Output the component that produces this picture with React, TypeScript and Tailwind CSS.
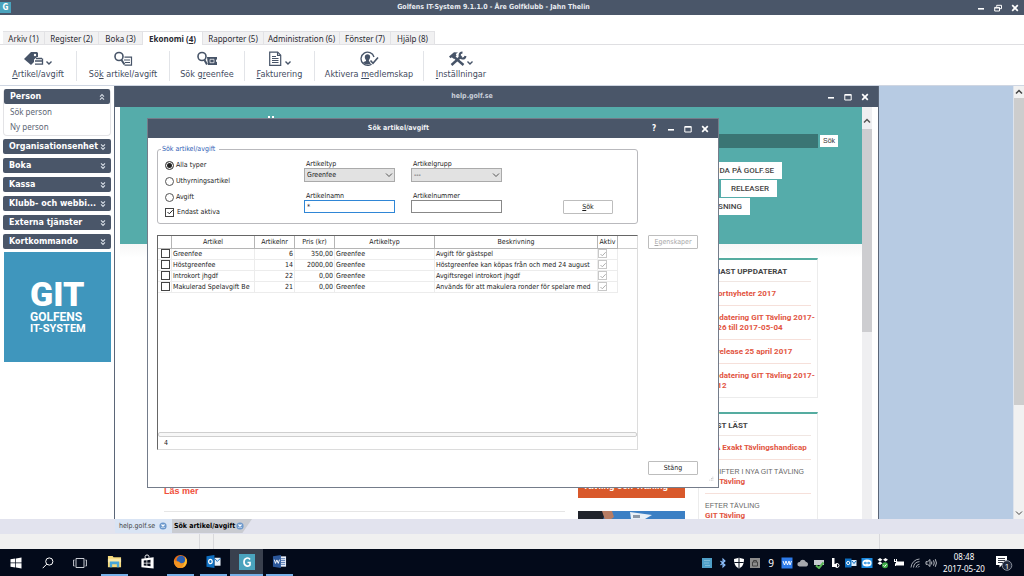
import React, { useState } from "react";
import type { ReactNode } from "react";

const UI = "font-['DejaVu_Sans_Condensed','Noto_Sans',sans-serif]";

type IconProps = { className?: string };

function ChevronDown({ className = "" }: IconProps) {
  return (
    <svg viewBox="0 0 8 8" className={className} fill="none" stroke="currentColor" strokeWidth="1">
      <path d="M1 2.5 4 5.5 7 2.5" />
    </svg>
  );
}

function ChevronUp({ className = "" }: IconProps) {
  return (
    <svg viewBox="0 0 8 8" className={className} fill="none" stroke="currentColor" strokeWidth="1.5">
      <path d="M1 5.5 4 2.5 7 5.5" />
    </svg>
  );
}

function DoubleChevron({ up }: { up?: boolean }) {
  return (
    <svg viewBox="0 0 8 8" className="size-2" fill="none" stroke="#d5dbe4" strokeWidth="1.1">
      {up ? <path d="M2 3.6 4 1.6 6 3.6M2 6.6 4 4.6 6 6.6" /> : <path d="M2 1.4 4 3.4 6 1.4M2 4.4 4 6.4 6 4.4" />}
    </svg>
  );
}

function WindowControls({ help, restore }: { help?: boolean; restore?: boolean }) {
  return (
    <div className="flex items-center gap-[9px] text-white">
      {help && (
        <button aria-label="Hjälp" className="w-2 text-[8px] leading-[10px] font-bold">
          ?
        </button>
      )}
      <button aria-label="Minimera">
        <svg viewBox="0 0 8 8" className="size-2">
          <path d="M1 4h6v1.6H1z" fill="currentColor" />
        </svg>
      </button>
      <button aria-label={restore ? "Återställ" : "Maximera"}>
        <svg viewBox="0 0 8 8" className="size-2" fill="none" stroke="currentColor">
          {restore ? (
            <path d="M2.7 2.8V1.3H7.5V4.7H6M.7 3.4H5.5V7H.7zM.7 4H5.5" />
          ) : (
            <path d="M.8 1.5H7.2V7H.8zM.8 2.2H7.2" />
          )}
        </svg>
      </button>
      <button aria-label="Stäng fönster">
        <svg viewBox="0 0 8 8" className="size-2" stroke="currentColor" strokeWidth="1.7">
          <path d="M1.2 1.2 6.8 6.8M6.8 1.2 1.2 6.8" />
        </svg>
      </button>
    </div>
  );
}

const MENU: { label: ReactNode; width: string; active?: boolean }[] = [
  { label: "Arkiv (1)", width: "w-[42px]" },
  { label: "Register (2)", width: "w-[54px]" },
  { label: "Boka (3)", width: "w-[44px]" },
  { label: <>Ekonomi (<u>4</u>)</>, width: "w-[60px]", active: true },
  { label: "Rapporter (5)", width: "w-[61px]" },
  { label: "Administration (6)", width: "w-[76px]" },
  { label: "Fönster (7)", width: "w-[51px]" },
  { label: "Hjälp (8)", width: "w-[44px]" },
];

function TagIcon() {
  return (
    <svg viewBox="0 0 30 16" className="h-4 w-[30px]">
      <path d="M1 8 8 1h6l1 1v5l-7 7z" fill="#475468" />
      <circle cx="12" cy="4" r="1.2" fill="#fff" />
      <path d="M11 8.5 14 6h6v8h-9z" fill="#fff" />
      <path d="M13 7.5h6M12 10h7M12 13.2h7.5V7.5" fill="none" stroke="#475468" strokeWidth="1.3" />
      <path d="M23.5 10.5 26 13 28.5 10.5" fill="none" stroke="#475468" strokeWidth="1.4" />
    </svg>
  );
}

function SearchListIcon() {
  return (
    <svg viewBox="0 0 20 16" className="h-4 w-5" fill="none" stroke="#475468">
      <circle cx="6" cy="5.5" r="4" strokeWidth="1.6" />
      <path d="M8.5 9 11.5 13.5" strokeWidth="2" />
      <path d="M11.5 6.2h7v8h-7M11 9h6M12 11.5h5" strokeWidth="1.2" />
    </svg>
  );
}

function SearchTicketIcon() {
  return (
    <svg viewBox="0 0 22 16" className="h-4 w-[22px]" fill="none" stroke="#475468">
      <circle cx="6" cy="5.5" r="4" strokeWidth="1.6" />
      <path d="M8.5 9 11 13.5" strokeWidth="2" />
      <path d="M11 6h10v2.3a1.6 1.6 0 0 0 0 3V14H12z" fill="#475468" stroke="none" />
      <path d="M14 8.3h4v3.4h-4z" stroke="#fff" strokeWidth=".7" />
    </svg>
  );
}

function InvoiceIcon() {
  return (
    <svg viewBox="0 0 24 16" className="h-4 w-6" fill="none" stroke="#475468">
      <path d="M1.7 1.2h8l3 3v10.1h-11z" strokeWidth="1.2" />
      <path d="M9.5 1.2v3.2h3.2M4 5.5h4M4 7.5h6.5M4 9.5h6.5M4 11.5h6.5" strokeWidth="1.1" />
      <path d="M17.5 10.5 20 13 22.5 10.5" strokeWidth="1.4" />
    </svg>
  );
}

function MemberIcon() {
  return (
    <svg viewBox="0 0 20 16" className="h-4 w-5" fill="none" stroke="#475468">
      <path d="M14.5 10.8A6.6 6.6 0 1 1 15 6" strokeWidth="1.3" />
      <path d="M8.5 3.2c3.3 0 3.2 4 1.4 5.7v1l3 1.4c-2 2.9-6.9 2.9-8.9 0l3-1.4v-1C5.3 7.2 5.2 3.2 8.5 3.2z" fill="#475468" stroke="none" />
      <path d="M11.5 9.5 14 12.5 19 6.5" stroke="#fff" strokeWidth="3.2" />
      <path d="M11.5 9.5 14 12.3 19 6.5" strokeWidth="1.6" />
    </svg>
  );
}

function ToolsIcon() {
  return (
    <svg viewBox="0 0 26 16" className="h-4 w-[26px]" fill="none" stroke="#475468">
      <path d="M5 5 15.5 14" strokeWidth="2.4" />
      <path d="M1 5.5 6 1.2l4 .3-2.2 1.6.7 1.7-3 2.9-1.6-1.5L2.5 7.3z" fill="#475468" stroke="none" />
      <path d="M3.5 14 13.5 5" strokeWidth="2.4" />
      <path d="M14.5 1.5a3 3 0 1 0 3 3.5" strokeWidth="2" />
      <path d="M19.5 10.5 22 13 24.5 10.5" strokeWidth="1.4" />
    </svg>
  );
}

const RIBBON: { label: ReactNode; icon: ReactNode; width: string }[] = [
  { label: <><u>A</u>rtikel/avgift</>, icon: <TagIcon />, width: "w-[77px]" },
  { label: <>Sö<u>k</u> artikel/avgift</>, icon: <SearchListIcon />, width: "w-[93px]" },
  { label: <>Sök g<u>r</u>eenfee</>, icon: <SearchTicketIcon />, width: "w-[75px]" },
  { label: <><u>F</u>akturering</>, icon: <InvoiceIcon />, width: "w-[70px]" },
  { label: <>Aktivera <u>m</u>edlemskap</>, icon: <MemberIcon />, width: "w-[109px]" },
  { label: <><u>I</u>nställningar</>, icon: <ToolsIcon />, width: "w-[74px]" },
];

function Sidebar() {
  const groups = ["Organisationsenhet", "Boka", "Kassa", "Klubb- och webbi...", "Externa tjänster", "Kortkommando"];
  const head =
    "flex h-[15px] w-full items-center justify-between rounded-[2px] bg-[#4a5669] pr-1 pl-1.5 text-left text-[8px] font-bold whitespace-nowrap text-white";
  return (
    <aside className="w-[114px] shrink-0 bg-white px-[3px] pt-[3px] font-['DejaVu_Sans',sans-serif]">
      <section className="mb-[3px] rounded border border-t-0 border-[#e3e3e6] pb-px">
        <button className={head}>
          Person <DoubleChevron up />
        </button>
        <ul className="px-1.5 font-['Noto_Sans',sans-serif] text-[8px] leading-[15px] text-[#5d6675]">
          <li><a href="#sok-person">Sök person</a></li>
          <li><a href="#ny-person">Ny person</a></li>
        </ul>
      </section>
      <div className="flex flex-col gap-1">
        {groups.map((g) => (
          <button key={g} className={head}>
            {g} <DoubleChevron />
          </button>
        ))}
      </div>
      <div className="mt-[3px] ml-px flex h-[110px] flex-col justify-center bg-[#3f96bd] pb-0.5 pl-[26px] font-['Roboto',sans-serif] font-bold text-white">
        <div className="text-[34px] leading-[34px] font-black">GIT</div>
        <div className="text-[12px] leading-3">GOLFENS</div>
        <div className="text-[11px] leading-3">IT-SYSTEM</div>
      </div>
    </aside>
  );
}

function NewsCard({ title, children }: { title: string; children: ReactNode }) {
  return (
    <section className="border border-t-2 border-[#ececec] border-t-[#55aca0] px-1.5">
      <h2 className="flex h-[22px] items-center overflow-hidden border-b border-[#f0e6e2] pt-0.5 text-[8px] font-bold whitespace-nowrap text-[#444]">
        {title}
      </h2>
      {children}
    </section>
  );
}

const newsItem =
  "block border-b border-[#f6e0da] pt-[7px] pb-1.5 text-[8px] leading-[10px] font-bold whitespace-nowrap text-[#e2553f] last:border-b-0";
const newsKicker = "block font-['Liberation_Sans',Arial,sans-serif] text-[7px] font-normal text-[#666]";

function HelpWindow() {
  const nav = "flex h-[17px] items-center justify-end bg-white text-[8px] font-medium whitespace-nowrap text-[#444]";
  return (
    <section className="absolute inset-y-0 left-0 flex w-[765px] flex-col overflow-hidden border-x border-[#5b6678] bg-white">
      <header className={`grid h-[21px] shrink-0 grid-cols-[1fr_auto_1fr] items-center bg-[#4a5669] pr-[9px] ${UI}`}>
        <span />
        <h1 className="pr-10 text-[7px] font-bold text-[#c9cfd9]">help.golf.se</h1>
        <div className="flex justify-end"><WindowControls /></div>
      </header>
      <div className="flex min-h-0 flex-1 pr-1.5 pl-[5px] font-['Roboto',Arial,sans-serif]">
        <div className="min-w-0 flex-1 overflow-hidden">
          <div className="flex h-[137px] justify-between bg-[#55acaa] pr-6 pl-[148px]">
            <div aria-hidden="true" className="flex gap-0.5 pt-[9px]">
              <i className="size-0.5 bg-white" />
              <i className="size-0.5 bg-white" />
            </div>
            <div className="w-[141px] pt-[27px]">
              <form className="flex items-center gap-0.5" onSubmit={(e) => e.preventDefault()}>
                <input aria-label="Sök på help.golf.se" className="h-[14px] w-[121px] bg-[#3a7574] px-1 text-[8px] text-white" />
                <button className="h-3 w-[18px] bg-white font-['Liberation_Sans',Arial,sans-serif] text-[7px] leading-3 text-[#333]">Sök</button>
              </form>
              <nav className="mt-3.5 flex flex-col gap-px">
                <a href="#golfse" className={`${nav} w-[85px] pr-2`}>DA PÅ GOLF.SE</a>
                <a href="#releaser" className={`${nav} ml-6 w-14 pr-2`}>RELEASER</a>
                <a href="#lasning" className={`${nav} w-[53px] pr-2`}>SNING</a>
              </nav>
            </div>
          </div>
          <div className="flex items-start gap-[13px] bg-linear-to-b from-[#f6f7f7] to-white to-[14px] pt-3.5 pl-11">
            <article className="w-[401px] border-b border-[#e6e6e6] pt-[228px] pb-3.5">
              <a href="#las-mer" className="block font-['Liberation_Sans',Arial,sans-serif] text-[9px] leading-[11px] font-bold text-[#f0503c]">Läs mer</a>
            </article>
            <div className="w-[107px] pt-[210px]">
              <div className="flex h-[30px] items-end justify-center bg-[#d9592b] pr-3 pb-1.5 font-['Liberation_Sans',Arial,sans-serif] text-[9px] leading-[11px] font-bold whitespace-nowrap text-white">
                Tävling och Träning
              </div>
              <svg viewBox="0 0 107 40" className="mt-[13px] h-10 w-full bg-[#3b7fc4]">
                <path d="M0 0h28L14 40H0z" fill="#20232b" />
                <path d="M24 0h10l2 6-8 6z" fill="#b77c63" />
                <path d="M52 1 74 4 67 8 53 8z" fill="#e9f0f7" />
                <path d="M55 4h7v3h-7z" fill="#8b97a6" />
              </svg>
            </div>
            <div className="flex w-[120px] flex-col gap-3.5">
              <NewsCard title="SENAST UPPDATERAT">
                <a href="#n1" className={newsItem}>Exportnyheter 2017</a>
                <a href="#n2" className={newsItem}>Uppdatering GIT Tävling 2017-<br />04-26 till 2017-05-04</a>
                <a href="#n3" className={newsItem}>Ny release 25 april 2017</a>
                <a href="#n4" className={newsItem}>Uppdatering GIT Tävling 2017-<br />04-12</a>
              </NewsCard>
              <NewsCard title="MEST LÄST">
                <a href="#m1" className={newsItem}>EGA Exakt Tävlingshandicap</a>
                <a href="#m2" className={newsItem}>
                  <span className={newsKicker}>AVGIFTER I NYA GIT TÄVLING</span>GIT Tävling
                </a>
                <a href="#m3" className={newsItem}>
                  <span className={newsKicker}>EFTER TÄVLING</span>GIT Tävling
                </a>
              </NewsCard>
            </div>
          </div>
        </div>
        <div className="flex w-2.5 shrink-0 flex-col items-center bg-[#efeff1]">
          <ChevronUp className="mt-2.5 mb-1 size-2 text-[#555]" />
          <div className="h-[203px] w-full bg-[#cdcdd0]" />
        </div>
      </div>
    </section>
  );
}

function CheckBox({ id, label, checked, disabled, onChange }: {
  id: string; label: string; checked: boolean; disabled?: boolean; onChange?: () => void;
}) {
  return (
    <span className="inline-grid size-[9px] place-items-center align-top">
      <input
        id={id}
        type="checkbox"
        aria-label={label}
        checked={checked}
        disabled={disabled}
        onChange={onChange}
        className="col-start-1 row-start-1 size-[9px] appearance-none border border-[#444] bg-white disabled:border-[#c8c8c8]"
      />
      {checked && (
        <svg viewBox="0 0 8 8" fill="none" stroke="currentColor"
          className={`pointer-events-none col-start-1 row-start-1 size-2 ${disabled ? "text-[#b0b0b0]" : "text-[#222]"}`}>
          <path d="M1.5 4 3.3 5.8 6.7 2.2" />
        </svg>
      )}
    </span>
  );
}

function SelectField({ id, label, options }: { id: string; label: string; options: string[] }) {
  return (
    <div className="w-[91px]">
      <label htmlFor={id} className="block pl-0.5 leading-[7px]">{label}</label>
      <div className="grid items-center">
        <select id={id} className="col-start-1 row-start-1 h-[14px] w-full appearance-none border border-[#aaa] bg-[#e2e2e2] px-0.5">
          {options.map((o) => <option key={o}>{o}</option>)}
        </select>
        <ChevronDown className="pointer-events-none col-start-1 row-start-1 mr-0.5 size-2 justify-self-end text-[#555]" />
      </div>
    </div>
  );
}

function TextField({ id, label, value, focused }: { id: string; label: string; value?: string; focused?: boolean }) {
  return (
    <div className="w-[91px]">
      <label htmlFor={id} className="block pl-0.5 leading-[7px]">{label}</label>
      <input
        id={id}
        defaultValue={value}
        className={`block h-[13px] w-full border bg-white px-0.5 outline-none ${focused ? "border-[#2f86d6]" : "border-[#888]"}`}
      />
    </div>
  );
}

const ROWS = [
  ["Greenfee", "6", "350,00", "Greenfee", "Avgift för gästspel"],
  ["Höstgreenfee", "14", "2000,00", "Greenfee", "Höstgreenfee kan köpas från och med 24 august"],
  ["Introkort jhgdf", "22", "0,00", "Greenfee", "Avgiftsregel introkort jhgdf"],
  ["Makulerad Spelavgift Be", "21", "0,00", "Greenfee", "Används för att makulera ronder för spelare med"],
];

function ArticleTable() {
  const [picked, setPicked] = useState<string[]>([]);
  const toggle = (name: string) =>
    setPicked((p) => (p.includes(name) ? p.filter((n) => n !== name) : [...p, name]));
  const th = "border-r border-b border-[#b5b5b5] p-0 text-center font-normal";
  const cell = "overflow-hidden border-r border-b border-[#ececec] py-0 whitespace-nowrap";
  const td = `${cell} px-px`;
  return (
    <div className="flex h-[215px] w-[481px] flex-col border border-[#dcdcdc] border-t-[#666] border-l-[#666]">
      <table className="w-full table-fixed border-separate border-spacing-0 leading-[10px]">
        <colgroup>
          <col className="w-[14px]" />
          <col className="w-[83px]" />
          <col className="w-10" />
          <col className="w-10" />
          <col className="w-[100px]" />
          <col className="w-[163px]" />
          <col className="w-5" />
          <col />
        </colgroup>
        <thead>
          <tr className="h-[13px]">
            <th className={th} aria-label="Välj" />
            {["Artikel", "Artikelnr", "Pris (kr)", "Artikeltyp", "Beskrivning", "Aktiv"].map((h) => (
              <th key={h} className={th}>{h}</th>
            ))}
            <th className="border-b border-[#ccc] p-0" aria-label="Övrigt" />
          </tr>
        </thead>
        <tbody>
          {ROWS.map(([name, nr, price, type, text]) => (
            <tr key={name} className="h-[11px]">
              <td className={`${cell} pr-0 pl-[3px]`}>
                <CheckBox id={`row-${nr}`} label={name} checked={picked.includes(name)} onChange={() => toggle(name)} />
              </td>
              <td className={td}>{name}</td>
              <td className={`${td} text-right`}>{nr}</td>
              <td className={`${td} text-right`}>{price}</td>
              <td className={td}>{type}</td>
              <td className={td}>{text}</td>
              <td className={`${cell} px-0`}>
                <CheckBox id={`active-${nr}`} label={`${name} aktiv`} checked disabled />
              </td>
              <td className="p-0" />
            </tr>
          ))}
        </tbody>
      </table>
      <div className="mt-auto h-[5px] rounded-xs border border-[#cfcfcf] bg-[#f7f7f7]" />
      <div className="h-3 pl-1.5 leading-3">4</div>
    </div>
  );
}

function ArticleDialog() {
  const [type, setType] = useState("Alla typer");
  const [activeOnly, setActiveOnly] = useState(true);
  const btn = "h-[14px] w-[50px] rounded-[1px] border border-[#bdbdbd] bg-white text-center leading-3";
  return (
    <section
      role="dialog"
      aria-labelledby="dialog-title"
      className={`absolute top-8 left-[33px] flex h-[370px] w-[572px] flex-col border border-[#747c8a] bg-white text-[7px] text-[#1c1c1c] ${UI}`}
    >
      <header className="grid h-[19px] shrink-0 grid-cols-[1fr_auto_1fr] items-center bg-[#4a5669] pr-[9px]">
        <span />
        <h1 id="dialog-title" className="pr-[60px] font-bold text-[#eef0f4]">Sök artikel/avgift</h1>
        <div className="flex justify-end"><WindowControls help /></div>
      </header>
      <div className="flex flex-1 gap-2.5 pt-1.5 pl-[9px]">
        <div className="flex flex-col gap-[11px]">
          <fieldset className="h-[80px] w-[481px] rounded-[3px] border border-[#b9b9bd]">
            <legend className="ml-[3px] pr-1 pl-px leading-[10px] text-[#2f62b5]">Sök artikel/avgift</legend>
            <div className="flex pl-[7px]">
              <div className="flex w-[139px] flex-col pt-[3px]">
                {["Alla typer", "Uthyrningsartikel", "Avgift"].map((t) => (
                  <label key={t} className="flex h-4 items-center gap-0.5">
                    <input
                      type="radio"
                      name="artikelurval"
                      checked={type === t}
                      onChange={() => setType(t)}
                      className="size-[9px] appearance-none rounded-full border border-[#555] bg-white checked:bg-[#222] checked:shadow-[inset_0_0_0_1px_white]"
                    />
                    {t}
                  </label>
                ))}
                <label htmlFor="endast-aktiva" className="flex h-3.5 items-center gap-[3px]">
                  <CheckBox id="endast-aktiva" label="Endast aktiva" checked={activeOnly} onChange={() => setActiveOnly(!activeOnly)} />
                  Endast aktiva
                </label>
              </div>
              <div className="grid grid-cols-[91px_91px] content-start gap-x-4 gap-y-[11px] pt-[7px]">
                <SelectField id="artikeltyp" label="Artikeltyp" options={["Greenfee"]} />
                <SelectField id="artikelgrupp" label="Artikelgrupp" options={["---"]} />
                <TextField id="artikelnamn" label="Artikelnamn" value="*" focused />
                <TextField id="artikelnummer" label="Artikelnummer" />
              </div>
              <button className={`${btn} mb-[5px] ml-[61px] self-end`}><u>S</u>ök</button>
            </div>
          </fieldset>
          <ArticleTable />
        </div>
        <div className="flex flex-col justify-between pt-[91px] pb-3">
          <button disabled className={`${btn} text-[#a8a8a8]`}><u>E</u>genskaper</button>
          <button className={btn}>Stäng</button>
        </div>
        <svg viewBox="0 0 8 8" className="mr-1 mb-1 ml-auto size-2 self-end" fill="#a5a5a5">
          <path d="M6 1h1v1H6zM6 3h1v1H6zM4 3h1v1H4zM6 5h1v1H6zM4 5h1v1H4zM2 5h1v1H2z" />
        </svg>
      </div>
    </section>
  );
}

function CloseDot() {
  return (
    <svg viewBox="0 0 8 8" className="size-2">
      <circle cx="4" cy="4" r="3.6" fill="#6c98cc" />
      <path d="M2.5 2.5 5.5 5.5M5.5 2.5 2.5 5.5" stroke="#fff" strokeWidth="1.2" />
    </svg>
  );
}

const TASKS: { name: string; open?: boolean; active?: boolean; icon: ReactNode }[] = [
  {
    name: "Utforskaren", open: true,
    icon: <><path d="M1 2h5l1 1.5h8V14H1z" fill="#f5d97b" /><path d="M1 5h14v4H1z" fill="#fbe9a6" /><path d="M3 8h10v6h-2.5v-3h-5v3H3z" fill="#48a6d8" /></>,
  },
  {
    name: "Store",
    icon: <><path d="M1.5 5 14.5 3.5V15.5L1.5 14z" fill="#fff" /><path d="M5.5 5V2.5C5.5.5 9.5.5 9.5 2.5V4" fill="none" stroke="#fff" /><path d="M4 7l3-.3v2.5H4zM7.7 6.6l3.5-.4v3H7.7zM4 10h3v2.5l-3-.3zM7.7 10h3.5v3l-3.5-.4z" fill="#060b18" /></>,
  },
  {
    name: "Firefox", open: true,
    icon: <><circle cx="8" cy="8" r="7" fill="#e8701a" /><circle cx="8.5" cy="6.5" r="4.6" fill="#2b5fae" /><path d="M1.2 5C2 9 4 7 6.5 8.2c1 2 4.5 2.5 6.5-.7l1.8-2.5c1 5-2 10-7 10C3 15 0 10.5 1.2 5z" fill="#f29321" /><path d="M13 3c3 4 1.5 10-3.5 11.5C12.5 11 13.5 7 13 3z" fill="#f7c331" /></>,
  },
  {
    name: "Outlook", open: true,
    icon: <><path d="M9 4h6.5v8.5H9z" fill="#e9f2fb" /><path d="M9.5 5 12 8l3.5-3.5" fill="none" stroke="#1470bd" /><path d="M.5 2.5 9 1v14L.5 13.5z" fill="#0f6fc0" /><ellipse cx="4.7" cy="8" rx="1.9" ry="2.3" fill="none" stroke="#fff" strokeWidth="1.3" /></>,
  },
  {
    name: "Golfens IT-System", open: true, active: true,
    icon: <><path d="M0 0h16v16H0z" fill="#4aa3bd" /><path d="M11 5.5C9.5 3 5 3.7 5 8s4.5 5 6 3V8.5H8.5" fill="none" stroke="#fff" strokeWidth="1.7" /></>,
  },
  {
    name: "Word", open: true,
    icon: <><path d="M8 2.5h7v11H8z" fill="#e9effa" /><path d="M9.5 5H14M9.5 7H14M9.5 9H14M9.5 11H14" stroke="#2b579a" strokeWidth=".8" /><path d="M1 2.5 9.5 1v14L1 13.5z" fill="#2b579a" /><path d="M2.5 6 3.7 10 5.2 6.3 6.7 10 8 6" fill="none" stroke="#fff" /></>,
  },
];

const TRAY: ReactNode[] = [
  <><path d="M1 1h10v10H1z" fill="#4f9fc8" /><path d="M3 3.5h6M3 6h5M4 8.5h5" stroke="#7fbcd9" /></>,
  <path d="M3.5 4 8 8 6 10V2L8 4 3.5 8" fill="none" stroke="#8fc2ff" strokeWidth="1.1" />,
  <><path d="M1 2 6 .7 11 2c0 5-1.5 8-5 9.500C2.500 10 1 7 1 2z" fill="#fff" /><path d="M6 1v10M1.300 5.500h9.400" stroke="#0a1220" /></>,
  <><path d="M1 1h10v10H1z" fill="#8d8d8d" /><path d="M3.5 5h5v4h-5zM4.5 5V3.5h3V5" fill="none" stroke="#444" /></>,
  <text x="6" y="9.5" fontSize="10" textAnchor="middle" fill="#fff" fontFamily="Noto Sans">9</text>,
  <><path d="M.5.5h11v11H.5z" fill="#2d7bea" /><path d="M2 4 3.5 8 5 4 6.5 8 8 4 9 8 10.5 4" fill="none" stroke="#fff" strokeWidth=".9" /></>,
  <path d="M2.5 9.5a2.3 2.3 0 0 1 .3-4.6 3.2 3.2 0 0 1 6-.2 2.5 2.5 0 0 1 .7 4.8z" fill="#a6a8ad" />,
  <><path d="M1 3h10v5H1z" fill="#c7cbd0" /><path d="M3 8.5 6 11 10.5 5.5" fill="none" stroke="#59b655" strokeWidth="2" /></>,
  <><path d="M3 1h2.5v9H3zM5 7h3v3H5z" fill="#fff" /><circle cx="8" cy="8.5" r="2" fill="none" stroke="#fff" /></>,
  <><path d="M6 3h5.5v6H6z" fill="#dcebf9" /><path d="M7 4 9 6.5 11 4" fill="none" stroke="#0f6fc0" /><path d="M0 1.5h6.5v9H0z" fill="#0f6fc0" /><circle cx="3.2" cy="6" r="1.6" fill="none" stroke="#fff" /></>,
  <><path d="M.5 1h11v10H.5z" fill="#1b8ae0" /><ellipse cx="6" cy="6" rx="4.6" ry="3.5" fill="#fff" /><path d="M2.5 6 4.5 4.5v1h3v-1l2 1.5-2 1.5v-1h-3v1z" fill="#1b8ae0" /></>,
  <><path d="M3 1 5.5 2.7 3 4.4.5 2.7zM8.5 1 11 2.7 8.5 4.4 6 2.7zM3 4.6 5.5 6.3 3 8 .5 6.3z" fill="#fff" /><circle cx="8" cy="8.3" r="3" fill="#3fae49" /><path d="M6.5 8.3 7.7 9.5 9.5 7.3" fill="none" stroke="#fff" /></>,
  <><path d="M3 4.5h8v4H3z" fill="#fff" /><path d="M1.5 2v3M3.5 2v3M1 4.5h3v2H2.5V9" fill="none" stroke="#fff" /></>,
  <path d="M2 10.5A9 9 0 0 1 10.5 2M4.5 10.5A6.5 6.5 0 0 1 10.5 4.6M7 10.5A4 4 0 0 1 10.5 7.2M9 10.5 10.5 9" fill="none" stroke="#b8bcc4" strokeWidth=".9" />,
  <path d="M1 4.7h1.7L5 2.5v7L2.7 7.3H1zM6.7 4.5v3M8.5 3.3q1.5 2.7 0 5.4M10.3 2.2q2.3 3.8 0 7.6" fill="none" stroke="#e4e7ec" strokeWidth=".8" />,
];

function Taskbar() {
  const sys = "flex h-full w-8 items-center justify-center";
  return (
    <footer className="flex h-[27px] shrink-0 items-center bg-[#030a1a] font-['Noto_Sans',sans-serif] text-white">
      <button className={sys} aria-label="Start">
        <svg viewBox="0 0 12 12" className="size-3" fill="#fff">
          <path d="M.5 2.2 5.3 1.5V5.6H.5zM6 1.4 11.5.6V5.6H6zM.5 6.3h4.8v4.2L.5 9.8zM6 6.3h5.5v5.1L6 10.6z" />
        </svg>
      </button>
      <button className={sys} aria-label="Sök i Windows">
        <svg viewBox="0 0 12 12" className="size-3" fill="none" stroke="#fff">
          <circle cx="7.3" cy="4.5" r="3.6" />
          <path d="M4.7 7.2.7 11.2" />
        </svg>
      </button>
      <button className={sys} aria-label="Aktivitetsvy">
        <svg viewBox="0 0 14 12" className="h-3 w-3.5" fill="none" stroke="#c9ccd3">
          <path d="M3 1.5h8v9H3zM1.5 3H.6v6h.9M12.5 3h.9v6h-.9" />
        </svg>
      </button>
      <div className="ml-0.5 flex h-full">
        {TASKS.map((t) => (
          <button key={t.name} aria-label={t.name} className={`flex h-full w-[33px] flex-col items-center ${t.active ? "bg-[#39404e]" : ""}`}>
            <span className="flex flex-1 items-center">
              <svg viewBox="0 0 16 16" className={t.active ? "size-4" : "size-[15px]"}>{t.icon}</svg>
            </span>
            <span className={`h-0.5 ${t.active ? "w-full" : "w-[27px]"} ${t.open ? "bg-[#76b0e8]" : ""}`} />
          </button>
        ))}
      </div>
      <div className="ml-auto flex items-center">
        {TRAY.map((icon, i) => (
          <span key={i} className="flex w-4 justify-center">
            <svg viewBox="0 0 12 12" className="size-3">{icon}</svg>
          </span>
        ))}
      </div>
      <div className="ml-[3px] w-[44px] text-center text-[8px] leading-3 whitespace-nowrap">
        <div>08:48</div>
        <div>2017-05-20</div>
      </div>
      <button aria-label="Meddelanden" className="mr-[11px] ml-[9px]">
        <svg viewBox="0 0 18 18" className="size-[18px]">
          <path d="M1 2h11v9H7l-2.5 2.5V11H1z" fill="#fff" />
          <path d="M3 4.5h7M3 6.5h7M3 8.5h5" stroke="#030a1a" strokeWidth=".8" />
          <circle cx="12" cy="11.5" r="4.8" fill="#20283a" stroke="#8a909c" />
          <text x="12" y="14.5" fontSize="8" textAnchor="middle" fill="#fff" fontFamily="Open Sans">1</text>
        </svg>
      </button>
    </footer>
  );
}

export default function App() {
  return (
    <div className="flex h-screen flex-col overflow-hidden bg-white">
      <header className={`grid h-[15px] shrink-0 grid-cols-[1fr_auto_1fr] items-center bg-[#4a5669] pr-[5px] ${UI}`}>
        <span className="flex size-[11px] items-center justify-center bg-[#4aa3bd] text-[8px] leading-none font-bold text-white">G</span>
        <h1 className="pr-8 text-[7px] font-bold text-[#e8ebf0]">Golfens IT-System 9.1.1.0 - Åre Golfklubb - Jahn Thelin</h1>
        <div className="flex justify-end"><WindowControls restore /></div>
      </header>
      <nav className="mt-4 flex h-3.5 shrink-0 border-b border-[#dfdfe2] pl-[3px] font-['Noto_Sans',sans-serif] text-[8px] text-[#2b2b33]">
        {MENU.map((m, i) => (
          <button
            key={i}
            className={`${m.width} h-3.5 border-t border-r border-[#e2e2e5] text-center leading-3.5 whitespace-nowrap ${m.active ? "bg-white font-bold" : "border-b bg-[#f1f1f2]"}`}
          >
            {m.label}
          </button>
        ))}
      </nav>
      <div className={`flex h-[41px] shrink-0 border-b border-[#cfd6e2] pt-1.5 pb-1 text-[9px] text-[#3f4b60] ${UI}`}>
        {RIBBON.map((r, i) => (
          <button key={i} className={`${r.width} flex flex-col items-center whitespace-nowrap ${i < 5 ? "border-r border-[#e2e4e8]" : ""}`}>
            {r.icon}
            <span className="leading-3.5">{r.label}</span>
          </button>
        ))}
      </div>
      <div className="flex min-h-0 flex-1">
        <Sidebar />
        <main className="relative min-w-0 flex-1 overflow-hidden bg-[#b7cbe3]">
          <HelpWindow />
          <ArticleDialog />
        </main>
        <div className="flex w-[11px] shrink-0 flex-col items-center border-l border-[#dde3ec] bg-[#f1f1f1]">
          <ChevronUp className="my-0.5 size-2 text-[#444]" />
          <div className="h-[307px] w-full bg-[#cdcdcd]" />
          <ChevronDown className="mt-auto mb-0.5 size-2 text-[#444]" />
        </div>
      </div>
      <div className={`flex h-[15px] shrink-0 items-start bg-[#e2e3ee] pl-[115px] text-[7px] whitespace-nowrap ${UI}`}>
        <button className="flex h-3.5 w-[57px] items-center gap-1 bg-[#d9e4f4] pl-1 text-[#444]">
          help.golf.se <CloseDot />
        </button>
        <button className="flex h-3.5 w-[80px] items-center gap-px bg-[#c9cbd1] pl-0.5 font-bold text-black [clip-path:polygon(0_0,100%_0,88%_100%,0_100%)]">
          Sök artikel/avgift <CloseDot />
        </button>
      </div>
      <div className="flex h-[15px] shrink-0 bg-[#f0f0f0]">
        <span className="w-[200px] border-r border-[#d9d9dc]" />
        <span className="w-3.5 border-r border-[#d9d9dc]" />
        <span className="w-[666px] border-r border-[#d9d9dc]" />
      </div>
      <Taskbar />
    </div>
  );
}
